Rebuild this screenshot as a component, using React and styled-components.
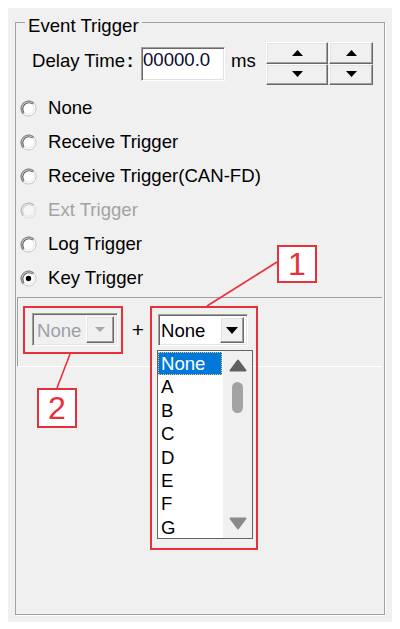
import React from 'react'
import styled, { createGlobalStyle } from 'styled-components'

const GlobalStyle = createGlobalStyle`
    * { box-sizing: border-box; }
    body {
        margin: 0;
        background: #ffffff;
        font-family: "Liberation Sans", Arial, sans-serif;
        font-size: 18.6px;
        color: #000;
    }
`

const Page = styled.div`
    position: relative;
    width: 400px;
    height: 629px;
    padding: 8px;
`

const Panel = styled.div`
    width: 384px;
    height: 614px;
    background: #f0f0f0;
    padding: 14px 7px 7px 7px;
`

const GroupBox = styled.div`
    height: 100%;
    border: 1px solid #a0a0a0;
    box-shadow: 1px 1px 0 #ffffff;
`

const Legend = styled.div`
    width: max-content;
    margin: -7px 0 0 9px;
    padding: 0 3px;
    line-height: 20px;
    background: #f0f0f0;
`

const DelayRow = styled.div`
    display: flex;
    align-items: flex-start;
    height: 43px;
    margin-top: 6px;
    padding-left: 16px;
`

const Label = styled.span`
    width: ${p => p.width}px;
    margin-top: 9px;
    line-height: 20px;
    white-space: nowrap;
`

const Colon = styled.b`
    margin-left: 2px;
    font-weight: 700;
`

const TextBox = styled.div`
    width: 84px;
    height: 34px;
    margin-top: 5px;
    padding: 2px 0 0 1px;
    line-height: 20px;
    background: #fff;
    border: 1px solid;
    border-color: #a0a0a0 #ffffff #ffffff #a0a0a0;
    box-shadow: inset 1px 1px 0 #696969, inset -1px -1px 0 #e3e3e3;
    color: #0a0a30;
`

const Spin = styled.div`
    display: flex;
    flex-direction: column;
    width: ${p => p.width}px;
    height: 43px;
    margin-left: ${p => p.gap}px;
`

const SpinHalf = styled.div`
    flex: 1;
    display: flex;
    align-items: center;
    justify-content: center;
    background: #f0f0f0;
    border: 1px solid;
    border-color: #ffffff #696969 #696969 #ffffff;
    box-shadow: inset -1px -1px 0 #a0a0a0, inset 1px 1px 0 #e3e3e3;
`

const RadioList = styled.div`
    margin-top: 6px;
    padding-left: 4px;
`

const RadioRow = styled.div`
    display: flex;
    align-items: center;
    height: 34px;
    color: ${p => (p.disabled ? '#a3a3a3' : '#000')};
`

const RadioText = styled.span`
    margin-left: 11px;
    line-height: 20px;
`

const KeyPanel = styled.div`
    display: flex;
    align-items: flex-start;
    height: 70px;
    margin: 2px 2px 0 1px;
    padding: 15px 0 0 14px;
    border-top: 1px solid #a0a0a0;
    border-left: 1px solid #a0a0a0;
    border-bottom: 1px solid #ffffff;
`

const Plus = styled.span`
    width: 40px;
    line-height: 33px;
    text-align: center;
    font-size: 21px;
`

const ComboWrap = styled.div`
    position: relative;
    margin-top: 1px;
`

const Combo = styled.div`
    display: flex;
    width: ${p => p.width}px;
    height: ${p => p.height}px;
    background: ${p => (p.disabled ? '#f0f0f0' : '#ffffff')};
    color: ${p => (p.disabled ? '#9aa0a8' : '#000')};
    border: 1px solid;
    border-color: #a0a0a0 #ffffff #ffffff #a0a0a0;
    box-shadow: inset 1px 1px 0 #696969, inset -1px -1px 0 #e3e3e3;
    padding: 2px;
`

const ComboText = styled.span`
    flex: 1;
    padding-left: ${p => p.pad}px;
    line-height: ${p => p.height - 4}px;
`

const ComboButton = styled.div`
    display: flex;
    align-items: center;
    justify-content: center;
    width: ${p => p.width}px;
    margin-right: 1px;
    background: #f0f0f0;
    border: 1px solid;
    border-color: #ffffff #696969 #696969 #ffffff;
    box-shadow: inset -1px -1px 0 #a0a0a0, inset 1px 1px 0 #e3e3e3;
`

const DropList = styled.div`
    position: absolute;
    top: 36px;
    left: -1px;
    z-index: 2;
    display: flex;
    width: 96px;
    height: 189px;
    background: #fff;
    border: 1px solid #646464;
`

const Items = styled.div`
    flex: 1;
    padding-top: 1px;
`

const Item = styled.div`
    height: 23.4px;
    margin-right: 1px;
    padding-left: 3px;
    line-height: 23px;
    color: ${p => (p.selected ? '#fff' : '#000')};
    background: ${p => (p.selected ? '#0078d7' : 'transparent')};
    outline: ${p => (p.selected ? '1px dotted #f2c879' : 'none')};
    outline-offset: -1px;
`

const ScrollBar = styled.div`
    display: flex;
    flex-direction: column;
    align-items: center;
    width: 29px;
    background: #f0f0f0;
`

const ScrollArrow = styled.div`
    display: flex;
    align-items: center;
    justify-content: center;
    width: 100%;
    height: 29px;
    margin-top: ${p => (p.bottom ? 'auto' : '0')};
`

const Thumb = styled.div`
    width: 11px;
    height: 31px;
    margin-top: 2px;
    border-radius: 6px;
    background: #a3a3a3;
`

const Mark = styled.div`
    position: absolute;
    left: ${p => p.x}px;
    top: ${p => p.y}px;
    width: ${p => p.w}px;
    height: ${p => p.h}px;
    border: 2px solid #e8303a;
    pointer-events: none;
    z-index: 3;
`

const Tag = styled(Mark)`
    display: flex;
    align-items: center;
    justify-content: center;
    background: #fff;
    color: #e8303a;
    font-size: 32px;
    line-height: 1;
`

const Leaders = styled.svg`
    position: absolute;
    left: 0;
    top: 0;
    z-index: 3;
    pointer-events: none;
`

const Arrow = ({ up, color = '#000', w = 10, h = 6 }) => (
    <svg width={w} height={h} viewBox={`0 0 ${w} ${h}`}>
        {up
            ? <polygon points={`0,${h} ${w / 2},0 ${w},${h}`} fill={color} />
            : <polygon points={`0,0 ${w / 2},${h} ${w},0`} fill={color} />}
    </svg>
)

const ScrollTri = ({ up, color }) => (
    <svg width="18" height="13" viewBox="0 0 18 13">
        <path
            d={up ? 'M9 1.5 L16.5 11.5 L1.5 11.5 Z' : 'M9 11.5 L16.5 1.5 L1.5 1.5 Z'}
            fill={color}
            stroke={color}
            strokeWidth="2"
            strokeLinejoin="round"
        />
    </svg>
)

const Radio = ({ checked, disabled }) => (
    <svg width="17" height="17" viewBox="0 0 17 17">
        <circle cx="8.5" cy="8.5" r="7.6" fill={disabled ? '#f6f6f6' : '#fff'} stroke={disabled ? '#dcdcdc' : '#c4c4c4'} strokeWidth="1" />
        <path d="M3.2 13.8 A7.5 7.5 0 0 1 13.8 3.2" fill="none" stroke={disabled ? '#bcbcbc' : '#8a8a8a'} strokeWidth="1.3" />
        <path d="M4.2 12.8 A6.1 6.1 0 0 1 12.8 4.2" fill="none" stroke={disabled ? '#d0d0d0' : '#555555'} strokeWidth="1.1" />
        <path d="M12.6 4.4 A5.8 5.8 0 0 1 4.4 12.6" fill="none" stroke="#e3e3e3" strokeWidth="1" />
        {checked && <circle cx="8.5" cy="8.5" r="2.7" fill="#000" />}
    </svg>
)

const triggers = [
    { label: 'None' },
    { label: 'Receive Trigger' },
    { label: 'Receive Trigger(CAN-FD)' },
    { label: 'Ext Trigger', disabled: true },
    { label: 'Log Trigger' },
    { label: 'Key Trigger', checked: true },
]

const keys = ['None', 'A', 'B', 'C', 'D', 'E', 'F', 'G']

const SpinBox = ({ width, gap }) => (
    <Spin width={width} gap={gap}>
        <SpinHalf><Arrow up w={11} h={6} /></SpinHalf>
        <SpinHalf><Arrow w={11} h={6} /></SpinHalf>
    </Spin>
)

const App = () => (
    <Page>
        <GlobalStyle />
        <Panel>
            <GroupBox>
                <Legend>Event Trigger</Legend>
                <DelayRow>
                    <Label width={109}>Delay Time<Colon>:</Colon></Label>
                    <TextBox>00000.0</TextBox>
                    <Label width={35} style={{ marginLeft: 6 }}>ms</Label>
                    <SpinBox width={62} gap={0} />
                    <SpinBox width={44} gap={1} />
                </DelayRow>
                <RadioList>
                    {triggers.map(t => (
                        <RadioRow key={t.label} disabled={t.disabled}>
                            <Radio checked={t.checked} disabled={t.disabled} />
                            <RadioText>{t.label}</RadioText>
                        </RadioRow>
                    ))}
                </RadioList>
                <KeyPanel>
                    <Combo disabled width={86} height={33}>
                        <ComboText pad={2} height={33}>None</ComboText>
                        <ComboButton width={28}><Arrow color="#a8a8a8" w={10} h={5} /></ComboButton>
                    </Combo>
                    <Plus>+</Plus>
                    <ComboWrap>
                        <Combo width={90} height={32}>
                            <ComboText pad={0} height={32}>None</ComboText>
                            <ComboButton width={24}><Arrow w={12} h={7} /></ComboButton>
                        </Combo>
                        <DropList>
                            <Items>
                                {keys.map((k, i) => (
                                    <Item key={k} selected={i === 0}>{k}</Item>
                                ))}
                            </Items>
                            <ScrollBar>
                                <ScrollArrow><ScrollTri up color="#606060" /></ScrollArrow>
                                <Thumb />
                                <ScrollArrow bottom><ScrollTri color="#8a8a8a" /></ScrollArrow>
                            </ScrollBar>
                        </DropList>
                    </ComboWrap>
                </KeyPanel>
            </GroupBox>
        </Panel>

        <Mark x={23} y={306} w={100} h={48} />
        <Mark x={150} y={306} w={108} h={244} />
        <Tag x={277} y={245} w={40} h={38}>1</Tag>
        <Tag x={37} y={388} w={40} h={40}>2</Tag>
        <Leaders width="400" height="629" viewBox="0 0 400 629">
            <line x1="277" y1="262" x2="207" y2="306" stroke="#e8303a" strokeWidth="1.6" />
            <line x1="70" y1="354" x2="57" y2="388" stroke="#e8303a" strokeWidth="1.6" />
        </Leaders>
    </Page>
)

export default App
